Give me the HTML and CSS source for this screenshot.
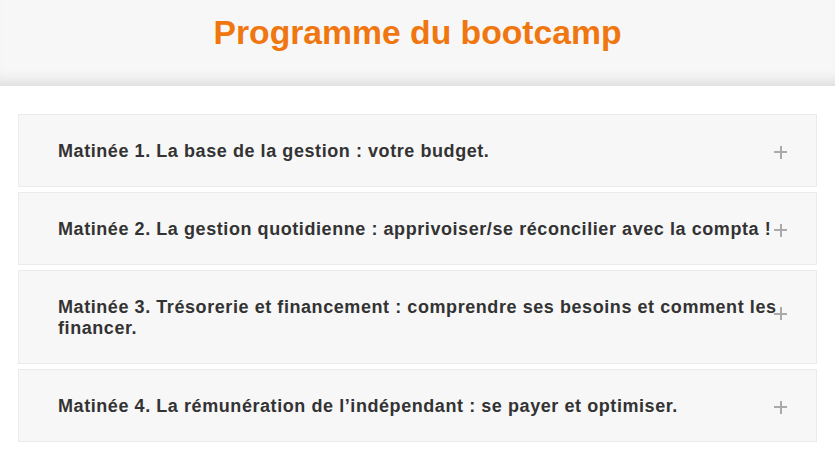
FILE: index.html
```html
<!DOCTYPE html>
<html lang="fr">
<head>
<meta charset="utf-8">
<title>Programme du bootcamp</title>
<link rel="stylesheet" href="styles.css">
</head>
<body>
<header class="hero">
  <h1 class="hero-title">Programme du bootcamp</h1>
</header>
<main class="accordion">
  <div class="item">
    <div class="item-title">Matinée 1. La base de la gestion : votre budget.</div>
    <span class="plus" aria-hidden="true"></span>
  </div>
  <div class="item">
    <div class="item-title">Matinée 2. La gestion quotidienne : apprivoiser/se réconcilier avec la compta !</div>
    <span class="plus" aria-hidden="true"></span>
  </div>
  <div class="item">
    <div class="item-title">Matinée 3. Trésorerie et financement : comprendre ses besoins et comment les financer.</div>
    <span class="plus plus-up" aria-hidden="true"></span>
  </div>
  <div class="item">
    <div class="item-title">Matinée 4. La rémunération de l’indépendant : se payer et optimiser.</div>
    <span class="plus" aria-hidden="true"></span>
  </div>
</main>
</body>
</html>
```

FILE: styles.css
```css
* { box-sizing: border-box; }

body {
  margin: 0;
  background: #ffffff;
  font-family: "Liberation Sans", Arial, sans-serif;
}

.hero {
  height: 86px;
  padding-top: 13px;
  background: #f7f7f7;
  box-shadow: inset 0 -14px 14px -10px rgba(0, 0, 0, 0.12);
  text-align: center;
}

.hero-title {
  margin: 0;
  font-size: 33.7px;
  font-weight: 700;
  color: #f0760f;
  line-height: 39px;
}

.accordion {
  padding: 28px 18px 0;
  display: flex;
  flex-direction: column;
  gap: 5px;
}

.item {
  position: relative;
  background: #f7f7f7;
  border: 1px solid #ebebeb;
  padding: 26px 36px 24px 39px;
}

.item-title {
  font-size: 18px;
  font-weight: 700;
  line-height: 21px;
  color: #333333;
  letter-spacing: 0.57px;
}

.plus {
  position: absolute;
  right: 29px;
  top: 50%;
  width: 13px;
  height: 13px;
  margin-top: -5px;
}

.plus-up {
  margin-top: -10px;
}

.plus::before,
.plus::after {
  content: "";
  position: absolute;
  background: #aaaaaa;
}

.plus::before {
  left: 0;
  right: 0;
  top: 5.5px;
  height: 2px;
}

.plus::after {
  top: 0;
  bottom: 0;
  left: 5.5px;
  width: 2px;
}
```
